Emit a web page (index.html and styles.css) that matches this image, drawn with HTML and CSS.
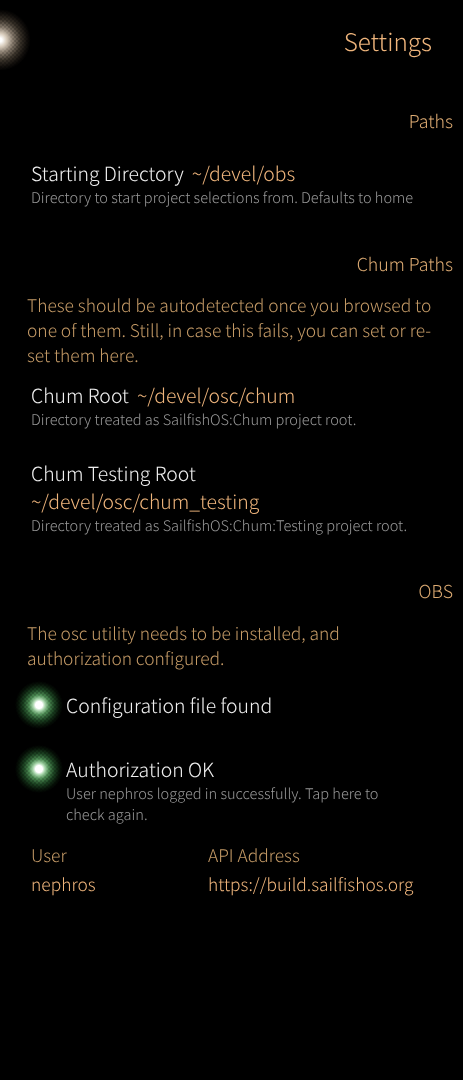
FILE: index.html
```html
<!DOCTYPE html>
<html lang="en">
<head>
    <meta charset="UTF-8">
    <meta name="viewport" content="width=device-width, initial-scale=1.0">
    <title>Settings</title>
    <link rel="stylesheet" href="styles.css">
</head>
<body>
    <div class="page">
        <div class="menu-glow"></div>
        <h1 class="page-title">Settings</h1>

        <h2 class="section-title section-paths">Paths</h2>
        <div class="value-item item-start">
            <div class="value-line">
                <span class="label">Starting Directory</span>
                <span class="value">~/devel/obs</span>
            </div>
            <div class="desc">Directory to start project selections from. Defaults to home</div>
        </div>

        <h2 class="section-title section-chum">Chum Paths</h2>
        <p class="note">These should be autodetected once you browsed to one of them. Still, in case this fails, you can set or re-set them here.</p>
        <div class="value-item item-chum">
            <div class="value-line">
                <span class="label">Chum Root</span>
                <span class="value">~/devel/osc/chum</span>
            </div>
            <div class="desc">Directory treated as SailfishOS:Chum project root.</div>
        </div>
        <div class="value-item item-testing">
            <div class="label">Chum Testing Root</div>
            <div class="value value-wrapped">~/devel/osc/chum_testing</div>
            <div class="desc">Directory treated as SailfishOS:Chum:Testing project root.</div>
        </div>

        <h2 class="section-title section-obs">OBS</h2>
        <p class="note note-obs">The osc utility needs to be installed, and authorization configured.</p>
        <div class="status-item item-config">
            <div class="status-light"></div>
            <div class="status-text">
                <div class="label">Configuration file found</div>
            </div>
        </div>
        <div class="status-item item-auth">
            <div class="status-light"></div>
            <div class="status-text">
                <div class="label">Authorization OK</div>
                <div class="desc">User nephros logged in successfully. Tap here to check again.</div>
            </div>
        </div>
        <div class="details">
            <div class="detail-col">
                <div class="detail-key">User</div>
                <div class="detail-val">nephros</div>
            </div>
            <div class="detail-col">
                <div class="detail-key">API Address</div>
                <div class="detail-val">https://build.sailfishos.org</div>
            </div>
        </div>
    </div>
</body>
</html>
```

FILE: styles.css
```css
html, body {
    margin: 0;
    background-color: #000;
}

body {
    font-family: "Noto Sans CJK JP", "Noto Sans", sans-serif;
    font-weight: 300;
    color: #fff;
    text-rendering: geometricPrecision;
}

.page {
    position: relative;
    width: 463px;
    height: 1080px;
    overflow: hidden;
    opacity: 0.999;
}

.menu-glow {
    position: absolute;
    left: -32px;
    top: 8px;
    width: 64px;
    height: 64px;
    background: radial-gradient(circle closest-side, #fff 0, #fff 6%, #d9cdbd 20%, #8a7e70 40%, #3a332a 64%, #120f0c 84%, #000 96%);
    border-radius: 50%;
}

.menu-glow::after,
.status-light::after {
    content: "";
    display: block;
    width: 100%;
    height: 100%;
    background: repeating-conic-gradient(rgba(0, 0, 0, 0.18) 0 25%, transparent 0 50%) 0 0 / 4px 4px;
    -webkit-mask-image: radial-gradient(circle closest-side, transparent 25%, #000 50%);
    mask-image: radial-gradient(circle closest-side, transparent 25%, #000 50%);
}

.page-title {
    margin: 0;
    padding: 22px 31px 0 0;
    text-align: right;
    font-size: 24.3px;
    line-height: 38px;
    font-weight: 300;
    color: #efb57c;
}

.section-title {
    margin: 0;
    padding-right: 10px;
    text-align: right;
    font-size: 17.8px;
    line-height: 26px;
    font-weight: 300;
    color: #dcaa72;
}

.section-paths {
    margin-top: 48px;
}

.section-chum {
    margin-top: 43px;
}

.section-obs {
    margin-top: 42px;
}

.value-item {
    padding: 0 31px;
}

.item-start {
    margin-top: 25px;
}

.item-chum {
    margin-top: 13px;
}

.item-testing {
    margin-top: 29px;
}

.value-line {
    display: flex;
    gap: 8px;
}

.label {
    font-size: 19.4px;
    line-height: 28px;
    color: #f0f0f0;
}

.value {
    font-size: 19.4px;
    line-height: 28px;
    color: #efb57c;
}

.value-wrapped {
    padding: 1px 0;
    line-height: 26px;
}

.desc {
    font-size: 14.6px;
    line-height: 21px;
    color: #979797;
}

.note {
    margin: 16px 0 0;
    padding: 0 27px;
    font-size: 17.4px;
    line-height: 25px;
    color: #c49a66;
}

.note-obs {
    margin-top: 17px;
}

.status-item {
    display: flex;
    align-items: flex-start;
}

.item-config {
    margin-top: 20px;
}

.item-auth {
    margin-top: 25px;
}

.status-light {
    flex: none;
    width: 50px;
    height: 50px;
    margin: -11px 2px 0 14px;
    border-radius: 50%;
    background: radial-gradient(circle closest-side, #fff 0, #fff 14%, #a8d6ab 24%, #4f8f56 40%, #1d4523 62%, #081509 82%, #000 96%);
}

.status-text {
    flex: 1;
    padding-right: 60px;
}

.details {
    display: flex;
    margin-top: 16px;
    padding-left: 31px;
}

.detail-col:first-child {
    width: 177px;
}

.detail-key {
    font-size: 17.4px;
    line-height: 29px;
    color: #c49a66;
}

.detail-val {
    font-size: 17.4px;
    line-height: 29px;
    color: #efb57c;
}
```
